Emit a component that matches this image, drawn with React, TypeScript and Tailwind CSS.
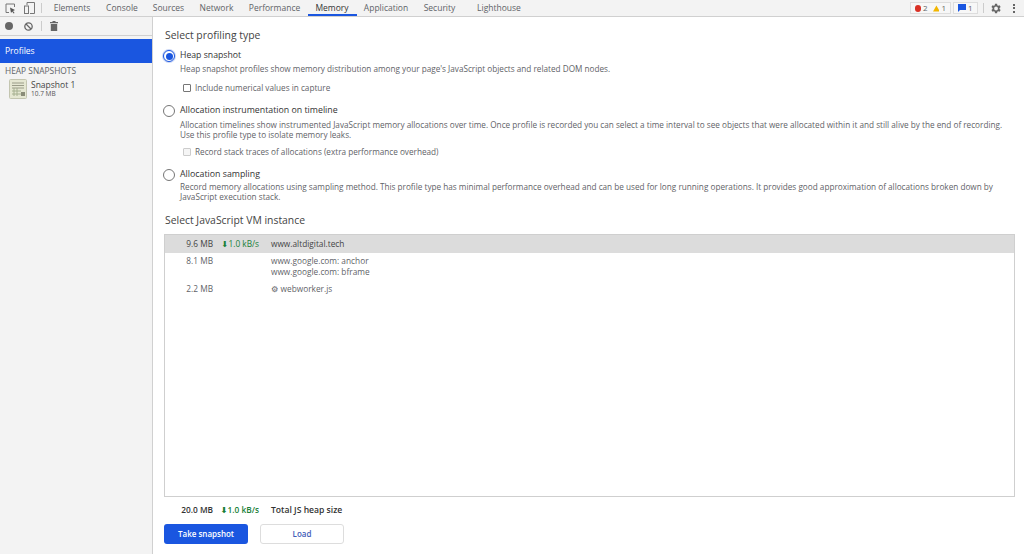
import React from "react";

const font = { fontFamily: '"Open Sans","Noto Sans","DejaVu Sans",sans-serif' };

function Tab({ label, w, active }: { label: string; w: string; active?: boolean }) {
  return (
    <div className={`${w} h-full flex items-center justify-center text-[8.5px] ${active ? "text-[#333] border-b-2 border-[#1a56e0] pt-[2px]" : "text-[#5f6368]"}`}>
      {label}
    </div>
  );
}

function Radio({ on }: { on?: boolean }) {
  return (
    <div className={`w-[12px] h-[12px] rounded-full border bg-white flex items-center justify-center shrink-0 ${on ? "border-[#1a56e0] shadow-[0_0_0_1px_#c9d6f5]" : "border-[#767676]"}`}>
      {on && <div className="w-[7px] h-[7px] rounded-full bg-[#1a56e0]" />}
    </div>
  );
}

export default function App() {
  return (
    <div style={font} className="w-[1024px] h-[554px] overflow-hidden bg-white flex flex-col text-[#444]">
      <div className="h-[17px] shrink-0 bg-[#f3f3f3] border-b border-[#d0d0d0] flex items-center">
        <div className="w-[41px] flex items-center pl-[5px] gap-[8px] shrink-0">
          <svg width="11" height="11" viewBox="0 0 11 11" fill="none">
            <path d="M4 9.500H1V1h8.500v3" stroke="#777" strokeWidth="1" />
            <path d="M5 4.500 10 7 8 8l1.600 2-1 .6L7.200 8.500 6 10z" fill="#555" />
          </svg>
          <svg width="11" height="12" viewBox="0 0 11 12" fill="none">
            <rect x="0.500" y="4" width="4" height="7.500" stroke="#777" />
            <path d="M3 3V.5h7.500v11H6" stroke="#777" />
          </svg>
        </div>
        <div className="w-px h-[10px] bg-[#ccc] shrink-0" />
        <div className="flex items-stretch h-full ml-[3.5px]">
          <Tab label="Elements" w="w-[53px]" />
          <Tab label="Console" w="w-[47px]" />
          <Tab label="Sources" w="w-[46px]" />
          <Tab label="Network" w="w-[50px]" />
          <Tab label="Performance" w="w-[66px]" />
          <Tab label="Memory" w="w-[49px]" active />
          <Tab label="Application" w="w-[59px]" />
          <Tab label="Security" w="w-[48px]" />
          <Tab label="Lighthouse" w="w-[71px]" />
        </div>
        <div className="ml-auto flex items-center h-full">
          <div className="flex items-center h-[12px] w-[41px] border border-[#ddd] bg-[#f7f7f7] px-[4px] gap-[2px] text-[8px] text-[#666]">
            <span className="w-[7px] h-[7px] rounded-full bg-[#d93025]" />
            <span className="mr-[3px]">2</span>
            <svg width="8" height="7" viewBox="0 0 8 7"><path d="M4 0l4 7H0z" fill="#f2b600" /></svg>
            <span>1</span>
          </div>
          <div className="flex items-center h-[12px] w-[25px] border border-[#ddd] bg-[#f7f7f7] px-[4px] gap-[2px] text-[8px] text-[#666] ml-[2px]">
            <svg width="8" height="8" viewBox="0 0 8 8"><path d="M0 0h8v6H2L0 8z" fill="#1a56e0" /></svg>
            <span>1</span>
          </div>
          <div className="w-px h-[10px] bg-[#ccc] ml-[5px]" />
          <svg className="ml-[5px]" width="13" height="13" viewBox="0 0 24 24" fill="#666">
            <path d="M19.400 13a7.500 7.500 0 0 0 0-2l2.100-1.600-2-3.400-2.500 1a7.500 7.500 0 0 0-1.700-1L15 3.300h-4L10.700 6a7.500 7.500 0 0 0-1.700 1l-2.500-1-2 3.400L6.600 11a7.500 7.500 0 0 0 0 2l-2.100 1.600 2 3.400 2.500-1a7.500 7.500 0 0 0 1.700 1l.3 2.700h4l.3-2.700a7.500 7.500 0 0 0 1.700-1l2.500 1 2-3.400zM13 15.500a3.500 3.500 0 1 1 0-7 3.500 3.500 0 0 1 0 7z" />
          </svg>
          <div className="flex flex-col gap-[1.500px] ml-[11px] mr-[9px]">
            <span className="w-[2px] h-[2px] bg-[#666]" />
            <span className="w-[2px] h-[2px] bg-[#666]" />
            <span className="w-[2px] h-[2px] bg-[#666]" />
          </div>
        </div>
      </div>

      <div className="flex-1 flex min-h-0">
        <div className="w-[153px] shrink-0 bg-[#f3f3f3] border-r border-[#d0d0d0] flex flex-col">
          <div className="h-[19px] flex items-center pl-[5px] gap-[11px] border-b border-[#d0d0d0]">
            <span className="w-[8px] h-[8px] rounded-full bg-[#666]" />
            <svg width="9" height="9" viewBox="0 0 9 9" fill="none">
              <circle cx="4.500" cy="4.500" r="3.700" stroke="#666" strokeWidth="1.300" />
              <path d="M2 2l5 5" stroke="#666" strokeWidth="1.300" />
            </svg>
            <div className="w-px h-[10px] bg-[#ccc] -mx-[3px]" />
            <svg width="8" height="10" viewBox="0 0 8 10"><path d="M0 1h2.500V0h3v1H8v1.200H0zM.8 3h6.400v7H.8z" fill="#666" /></svg>
          </div>
          <div className="h-[24px] mt-[3px] bg-[#1a56e0] text-white text-[8.500px] flex items-center pl-[5px]">Profiles</div>
          <div className="text-[8.400px] text-[#5f6368] pl-[5px] mt-[2px] h-[12px] leading-[12px]">HEAP SNAPSHOTS</div>
          <div className="flex items-center pl-[9px] mt-[2px] gap-[4px]">
            <svg width="18" height="20" viewBox="0 0 18 20">
              <rect x="0.500" y="0.500" width="17" height="19" rx="1" fill="#e5e7d2" stroke="#c3c5b0" />
              <path d="M3 4h12M3 6.500h12M3 9h12" stroke="#9a9c88" />
              <path d="M5 9v8M8 9v8M3 12h9M3 15h9" stroke="#a6b090" />
              <path d="M12 13h4v4h-4z" fill="#8a8c78" />
            </svg>
            <div className="flex flex-col">
              <span className="text-[8.500px] leading-[10px] text-[#444]">Snapshot 1</span>
              <span className="text-[6.500px] leading-[8px] text-[#555]">10.7 MB</span>
            </div>
          </div>
        </div>

        <div className="flex-1 min-w-0 flex flex-col pl-[11px] pr-[9px]">
          <div className="text-[10.400px] leading-[14px] text-[#444] mt-[11px] ml-[1px]">Select profiling type</div>
          <div className="flex items-center gap-[5px] mt-[7px] h-[14px] -ml-px">
            <Radio on />
            <span className="text-[8.700px] text-[#333]">Heap snapshot</span>
          </div>
          <div className="text-[8.200px] leading-[11px] text-[#5f6368] ml-[16px]">
            Heap snapshot profiles show memory distribution among your page's JavaScript objects and related DOM nodes.
          </div>
          <div className="flex items-center gap-[4px] ml-[19px] mt-[9px] h-[10px] text-[8.200px] text-[#5f6368]">
            <span className="w-[8px] h-[8px] border border-[#767676] rounded-[1px] bg-white" />
            Include numerical values in capture
          </div>
          <div className="flex items-center gap-[5px] mt-[11px] h-[14px] -ml-px">
            <Radio />
            <span className="text-[8.800px] text-[#333]">Allocation instrumentation on timeline</span>
          </div>
          <div className="text-[8.200px] leading-[9.500px] text-[#5f6368] ml-[16px] mt-[2px] whitespace-nowrap">
            Allocation timelines show instrumented JavaScript memory allocations over time. Once profile is recorded you can select a time interval to see objects that were allocated within it and still alive by the end of recording.
            <br />
            Use this profile type to isolate memory leaks.
          </div>
          <div className="flex items-center gap-[4px] ml-[19px] mt-[8px] h-[10px] text-[8.200px] text-[#5f6368]">
            <span className="w-[8px] h-[8px] border border-[#ccc] rounded-[1px] bg-[#f5f5f5]" />
            Record stack traces of allocations (extra performance overhead)
          </div>
          <div className="flex items-center gap-[5px] mt-[11px] h-[14px] -ml-px">
            <Radio />
            <span className="text-[8.800px] text-[#333]">Allocation sampling</span>
          </div>
          <div className="text-[8.200px] leading-[10px] text-[#5f6368] ml-[16px] whitespace-nowrap">
            Record memory allocations using sampling method. This profile type has minimal performance overhead and can be used for long running operations. It provides good approximation of allocations broken down by
            <br />
            JavaScript execution stack.
          </div>
          <div className="text-[10.400px] leading-[14px] text-[#444] mt-[11px] ml-[1px]">Select JavaScript VM instance</div>
          <div className="mt-[7px] h-[263px] border border-[#cfcfcf] flex flex-col text-[8.300px] text-[#5f6368]">
            <div className="h-[18px] bg-[#dcdcdc] flex items-center shrink-0 text-[#444]">
              <span className="w-[48px] text-right">9.6 MB</span>
              <span className="w-[46px] text-right text-[#188038]">⬇1.0 kB/s</span>
              <span className="ml-[12px]">www.altdigital.tech</span>
            </div>
            <div className="flex pt-[2px]">
              <span className="w-[48px] text-right">8.1 MB</span>
              <div className="ml-[58px] leading-[11px]">
                www.google.com: anchor
                <br />
                www.google.com: bframe
              </div>
            </div>
            <div className="flex mt-[6px]">
              <span className="w-[48px] text-right">2.2 MB</span>
              <span className="ml-[58px]">⚙ webworker.js</span>
            </div>
          </div>
          <div className="flex items-center h-[12px] mt-[7px] text-[8.300px] font-semibold text-[#333]">
            <span className="w-[49px] text-right">20.0 MB</span>
            <span className="w-[46px] text-right text-[#188038]">⬇1.0 kB/s</span>
            <span className="ml-[12px] text-[8.600px]">Total JS heap size</span>
          </div>
          <div className="flex items-center mt-[8px] gap-[12px]">
            <button className="w-[84px] h-[20px] rounded-[3px] bg-[#1a56e0] text-white text-[8px] font-semibold">Take snapshot</button>
            <button className="w-[84px] h-[20px] rounded-[3px] border border-[#ddd] bg-white text-[#3f5cb8] text-[8px] font-semibold">Load</button>
          </div>
        </div>
      </div>
    </div>
  );
}
